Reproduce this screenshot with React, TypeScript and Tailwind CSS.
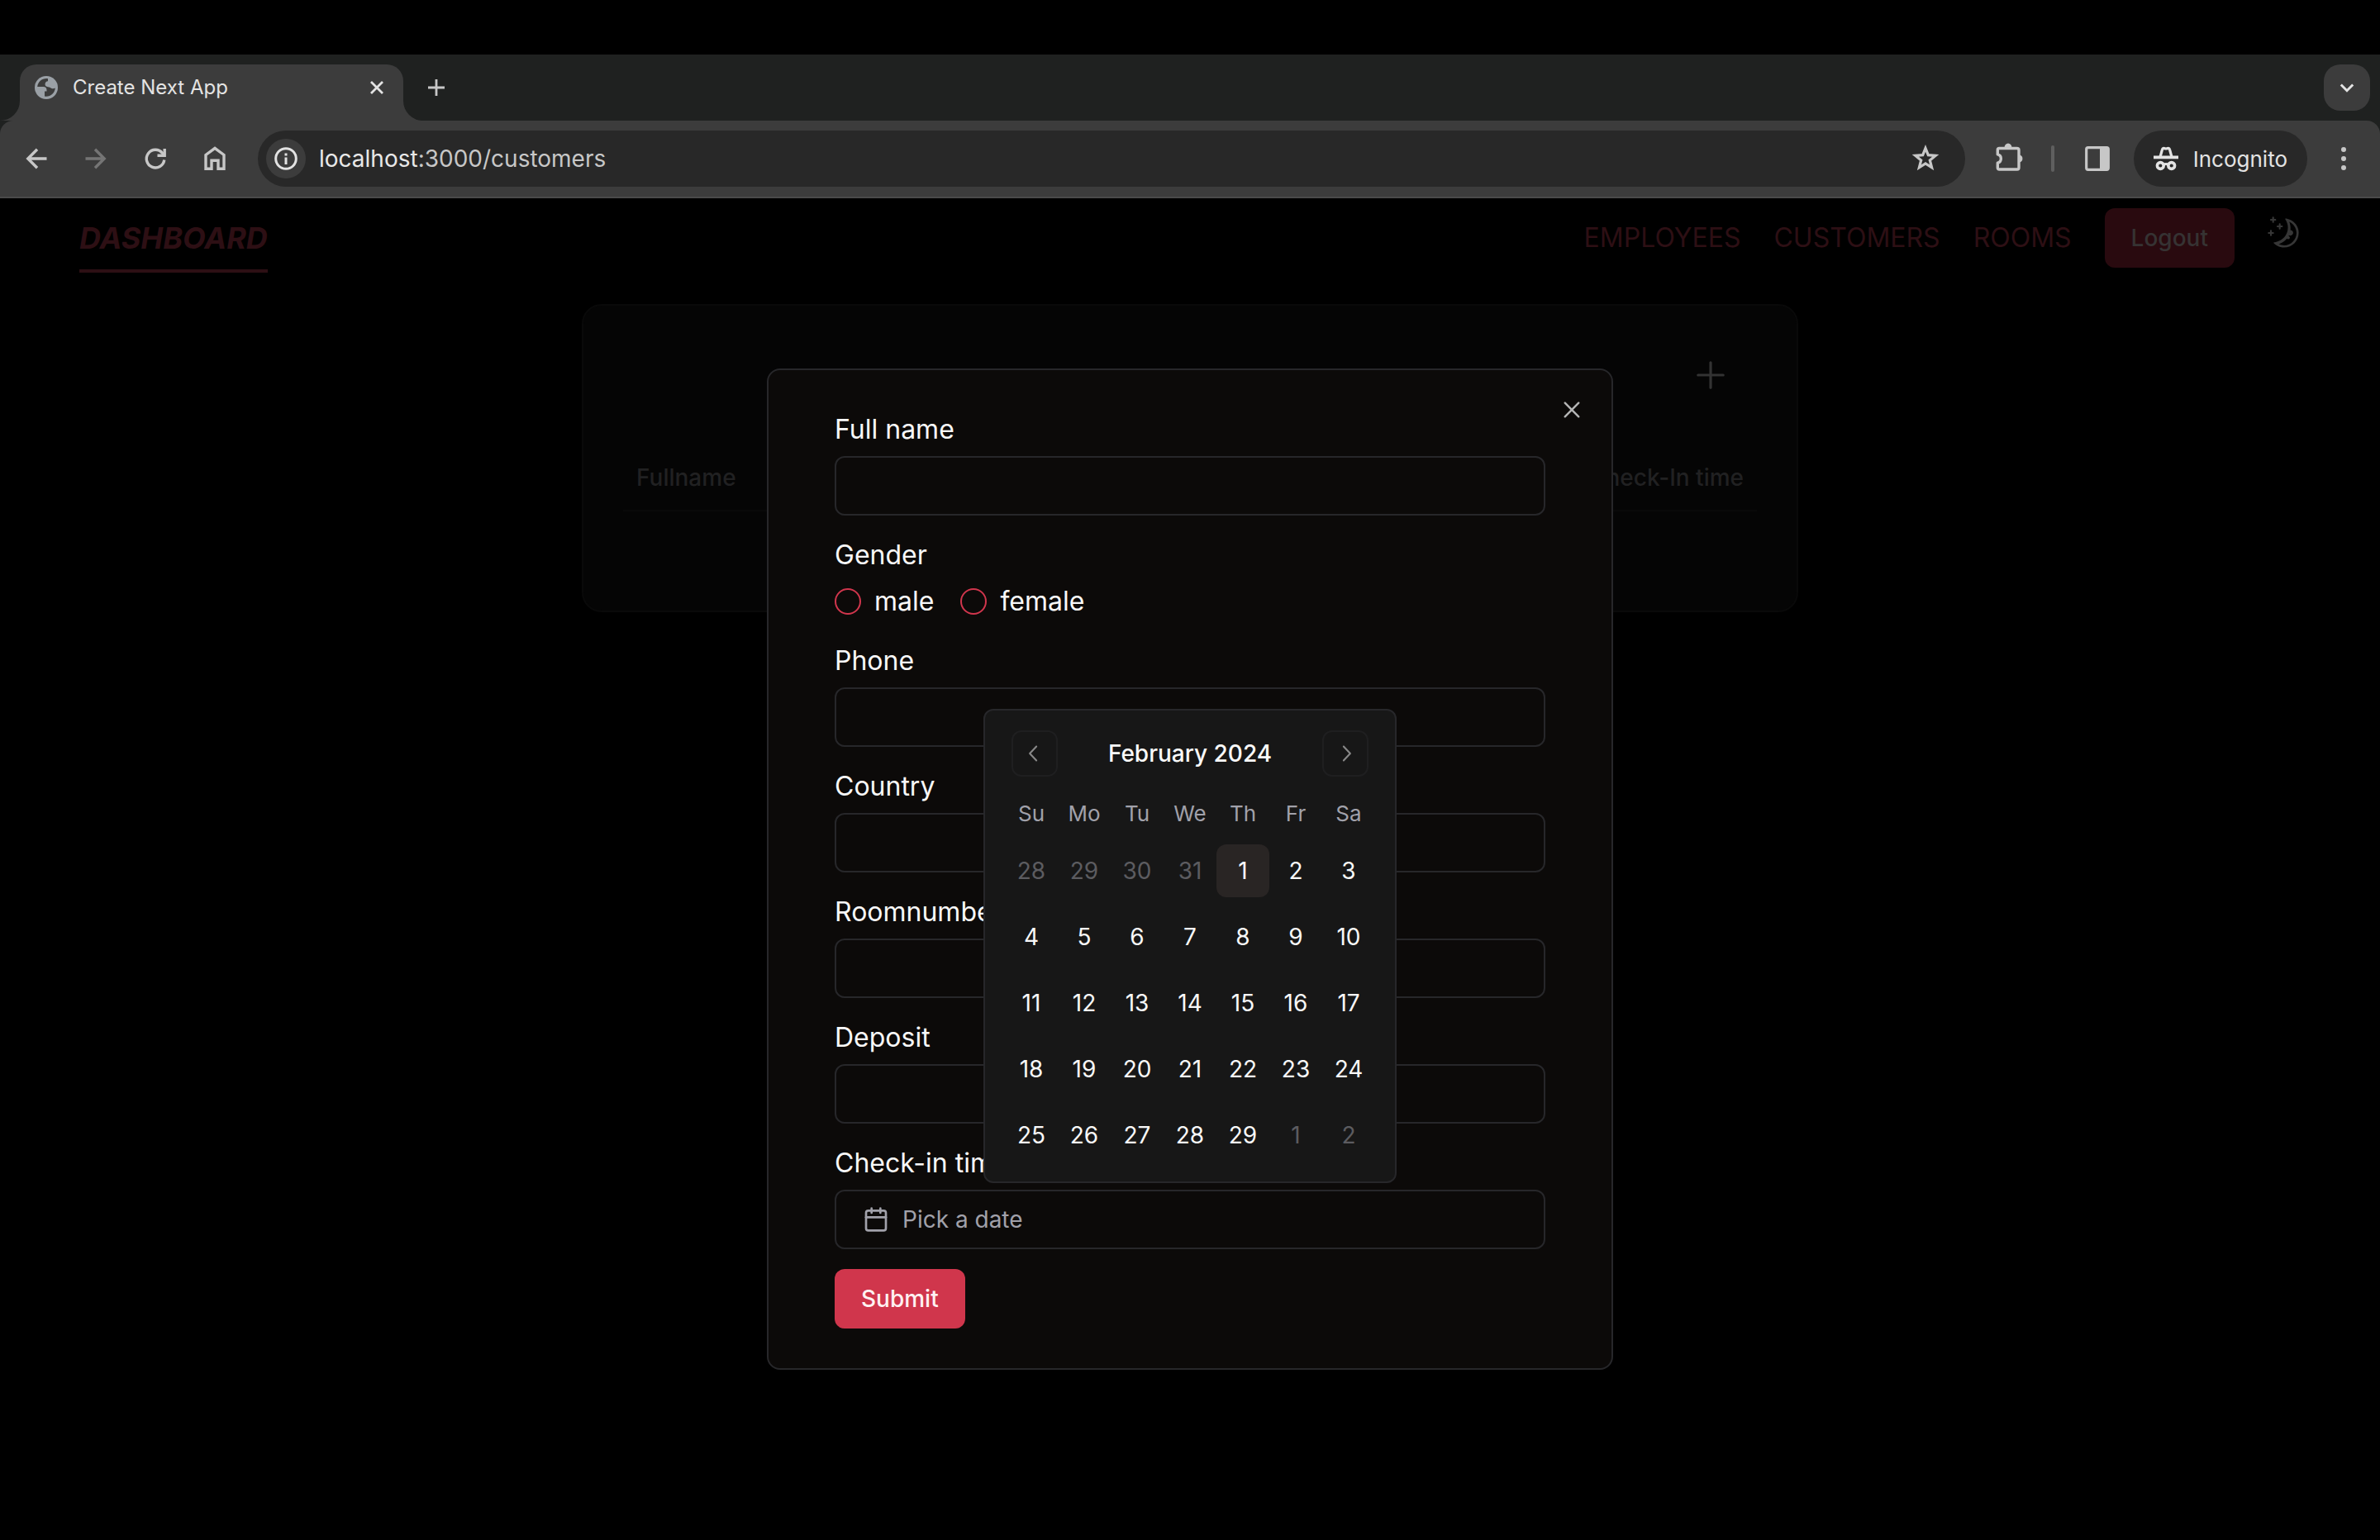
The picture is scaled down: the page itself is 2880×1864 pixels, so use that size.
import React from "react";
import { Calendar } from "lucide-react";
import { RxChevronLeft, RxChevronRight, RxCross2, RxMoon, RxPlus } from "react-icons/rx";

const WEEKDAYS = ["Su", "Mo", "Tu", "We", "Th", "Fr", "Sa"];
const WEEKS = [
  [28, 29, 30, 31, 1, 2, 3],
  [4, 5, 6, 7, 8, 9, 10],
  [11, 12, 13, 14, 15, 16, 17],
  [18, 19, 20, 21, 22, 23, 24],
  [25, 26, 27, 28, 29, 1, 2],
];

function GlobeIcon() {
  return (
    <svg viewBox="0 0 28 28" className="size-7 shrink-0" aria-hidden="true">
      <circle cx="14" cy="14" r="14" fill="#9aa0a6" />
      <path
        fill="#3c3c3c"
        d="M16 3.2C9.500 2.300 4 6.500 3.200 13H10.500C13 13 14.500 14.500 14.500 17V18.500H12V24.600C18.500 25.800 24.500 21 24.800 14.500C23.500 15.500 21.500 15.600 20 14.800C18.500 14 18.200 13.300 16 13.200C13.500 13 12.300 11.500 12.600 9.500C12.800 7.500 14 6.500 16 6.300Z"
      />
    </svg>
  );
}

function BackIcon() {
  return (
    <svg viewBox="0 0 40 40" className="size-10" fill="none" stroke="currentColor" strokeWidth="3.400" aria-hidden="true">
      <path d="M32.500 20H10M21 8.800L9.800 20L21 31.200" />
    </svg>
  );
}

function ForwardIcon() {
  return (
    <svg viewBox="0 0 40 40" className="size-10" fill="none" stroke="currentColor" strokeWidth="3.400" aria-hidden="true">
      <path d="M7.500 20H30M19 8.800L30.200 20L19 31.200" />
    </svg>
  );
}

function ReloadIcon() {
  return (
    <svg viewBox="0 0 40 40" className="size-10" fill="none" stroke="currentColor" strokeWidth="3.400" aria-hidden="true">
      <path d="M30.800 21.500A10.800 10.800 0 1 1 28.500 13.300L30.500 16" />
      <path d="M31.200 8V16.300H22.500" />
    </svg>
  );
}

function HomeIcon() {
  return (
    <svg viewBox="0 0 40 40" className="size-10" fill="none" stroke="currentColor" strokeWidth="3.400" aria-hidden="true">
      <path d="M9 32.300V15.500L20 7.400L31 15.500V32.300H24V22.300H16V32.300Z" />
    </svg>
  );
}

function InfoIcon() {
  return (
    <svg viewBox="0 0 28 28" className="size-7" aria-hidden="true">
      <circle cx="14" cy="14" r="12.300" fill="none" stroke="currentColor" strokeWidth="3" />
      <rect x="12.500" y="12.500" width="3" height="8.500" fill="currentColor" />
      <rect x="12.500" y="7.500" width="3" height="3" fill="currentColor" />
    </svg>
  );
}

function StarIcon() {
  return (
    <svg viewBox="0 0 40 40" className="size-10" aria-hidden="true">
      <path
        fill="none"
        stroke="currentColor"
        strokeWidth="3.200"
        d="M20 7.300L23.300 15.700L32.200 16.300L25.300 22L27.600 30.800L20 26L12.400 30.800L14.700 22L7.800 16.300L16.700 15.700Z"
      />
    </svg>
  );
}

function PuzzleIcon() {
  return (
    <svg viewBox="0 0 40 40" className="size-10" aria-hidden="true">
      <path
        fill="none"
        stroke="currentColor"
        strokeWidth="3.400"
        strokeLinejoin="round"
        d="M5.300 9.500Q5.300 7.500 7.300 7.500H28.500Q31 7.500 31 9.500V31Q31 33 29 33H7.300Q5.300 33 5.300 31V25.200A5.300 5.300 0 0 0 5.300 14.900Z"
      />
      <path fill="currentColor" d="M13.500 7A4.500 5.500 0 0 1 22.500 7ZM31.500 15.500A4.600 4.600 0 0 1 31.500 24.600Z" />
    </svg>
  );
}

function SidePanelIcon() {
  return (
    <svg viewBox="0 0 30 30" className="size-[30px]" aria-hidden="true">
      <rect x="1.700" y="1.700" width="26.600" height="26.600" rx="2" fill="none" stroke="currentColor" strokeWidth="3.200" />
      <rect x="18" y="2" width="11" height="26" fill="currentColor" />
    </svg>
  );
}

function IncognitoIcon() {
  return (
    <svg viewBox="0 0 30 30" className="size-[30px]" aria-hidden="true">
      <path
        fill="none"
        stroke="currentColor"
        strokeWidth="3.200"
        strokeLinejoin="round"
        d="M8 13L10.500 4Q11 2 13 2.600Q15 3.400 17 2.600Q19 2 19.500 4L22 13"
      />
      <rect x="0" y="11.500" width="30" height="3.800" fill="currentColor" />
      <circle cx="8.300" cy="23.500" r="3.900" fill="none" stroke="currentColor" strokeWidth="3.600" />
      <circle cx="21.700" cy="23.500" r="3.900" fill="none" stroke="currentColor" strokeWidth="3.600" />
      <path d="M12 22.500Q15 20.500 18 22.500" fill="none" stroke="currentColor" strokeWidth="3" />
    </svg>
  );
}

function TabStrip() {
  return (
    <div className="flex h-20 items-end bg-[#1f2120] pr-3 pl-6">
      <div className="relative flex h-[68px] w-[464px] items-center rounded-t-[20px] bg-[#3c3c3c] pb-3 pr-5 pl-[18px]">
        <span className="absolute bottom-0 -left-6 size-6 bg-[#3c3c3c]">
          <span className="block size-full rounded-br-[24px] bg-[#1f2120]" />
        </span>
        <span className="absolute -right-6 bottom-0 size-6 bg-[#3c3c3c]">
          <span className="block size-full rounded-bl-[24px] bg-[#1f2120]" />
        </span>
        <GlobeIcon />
        <span className="ml-[18px] flex-1 text-[24px] text-[#e3e3e3]">Create Next App</span>
        <button type="button" aria-label="Close tab" className="text-[#e3e3e3]">
          <svg viewBox="0 0 24 24" className="size-6" stroke="currentColor" strokeWidth="2.800" aria-hidden="true">
            <path d="M5 5L19 19M19 5L5 19" />
          </svg>
        </button>
      </div>
      <button type="button" aria-label="New tab" className="mb-7 ml-7 text-[#c7c7c7]">
        <svg viewBox="0 0 24 24" className="size-6" stroke="currentColor" strokeWidth="2.800" aria-hidden="true">
          <path d="M12 2V22M2 12H22" />
        </svg>
      </button>
      <button
        type="button"
        aria-label="Search tabs"
        className="mb-3 ml-auto flex size-14 items-center justify-center rounded-[20px] bg-[#3c3c3c] text-[#e3e3e3]"
      >
        <svg viewBox="0 0 20 20" className="size-5" fill="none" stroke="currentColor" strokeWidth="3" aria-hidden="true">
          <path d="M2.800 6.500L10 13.700L17.200 6.500" />
        </svg>
      </button>
    </div>
  );
}

function Toolbar() {
  return (
    <div className="bg-[#1f2120]">
      <div className="flex h-[94px] items-center rounded-t-2xl border-b-2 border-[#4a4a4a] bg-[#3c3c3c] pr-6 pl-6 text-[#c7c7c7]">
        <div className="flex gap-8">
          <button type="button" aria-label="Back"><BackIcon /></button>
          <button type="button" aria-label="Forward" className="text-[#757575]"><ForwardIcon /></button>
          <button type="button" aria-label="Reload"><ReloadIcon /></button>
          <button type="button" aria-label="Home"><HomeIcon /></button>
        </div>
        <div className="ml-8 flex h-[68px] flex-1 items-center rounded-full bg-[#282828] pr-7 pl-[10px]">
          <button
            type="button"
            aria-label="View site information"
            className="flex size-12 items-center justify-center rounded-full bg-[#3c3c3c] text-[#e3e3e3]"
          >
            <InfoIcon />
          </button>
          <div className="ml-4 flex-1 text-[28px]">
            <span className="text-[#e8e8e8]">localhost</span>:3000/customers
          </div>
          <button type="button" aria-label="Bookmark this tab"><StarIcon /></button>
        </div>
        <div className="ml-8 flex items-center gap-7">
          <button type="button" aria-label="Extensions" className="flex w-11 justify-center"><PuzzleIcon /></button>
          <span className="h-8 w-1 rounded-full bg-[#5f5f5f]" />
          <button type="button" aria-label="Side panel" className="flex w-12 justify-center"><SidePanelIcon /></button>
        </div>
        <button type="button" className="ml-5 flex h-[68px] items-center gap-[18px] rounded-full bg-[#282828] px-6 text-[26px] text-[#e3e3e3]">
          <IncognitoIcon />
          Incognito
        </button>
        <button type="button" aria-label="Menu" className="ml-6 flex w-10 flex-col items-center gap-[5px]">
          <span className="size-[6px] rounded-full bg-[#c7c7c7]" />
          <span className="size-[6px] rounded-full bg-[#c7c7c7]" />
          <span className="size-[6px] rounded-full bg-[#c7c7c7]" />
        </button>
      </div>
    </div>
  );
}

function SiteHeader() {
  return (
    <header className="flex items-start justify-between px-24 pt-3">
      <a href="#dashboard" className="mt-3 border-b-4 border-[#2d0f14] pb-[14px] text-[36px] leading-[48px] font-bold text-[#2d0f14] italic">
        DASHBOARD
      </a>
      <nav className="flex items-center gap-10 text-[32px] text-[#2d0f14]">
        <a href="#employees">EMPLOYEES</a>
        <a href="#customers">CUSTOMERS</a>
        <a href="#rooms">ROOMS</a>
        <button type="button" className="h-[72px] rounded-xl bg-[#290a0f] px-8 text-[28px] font-medium text-[#363333]">
          Logout
        </button>
        <button type="button" aria-label="Toggle theme" className="mb-3 text-[#363636]">
          <RxMoon size={40} />
        </button>
      </nav>
    </header>
  );
}

function CustomerList() {
  return (
    <section className="mx-auto mt-[38px] w-[1472px] rounded-3xl border-2 border-[#090909] bg-[#050505] px-12 pt-[60px] pb-[120px]">
      <div className="flex justify-end pr-8">
        <button type="button" aria-label="Add customer" className="text-[#333333]">
          <RxPlus size={48} />
        </button>
      </div>
      <table className="mt-[60px] w-full text-[28px] text-[#212122]">
        <thead>
          <tr className="h-20 border-b-2 border-[#090909]">
            <th scope="col" className="px-4 text-left font-medium">Fullname</th>
            <th scope="col" className="px-4 text-right font-medium">Check-In time</th>
          </tr>
        </thead>
      </table>
    </section>
  );
}

function DatePopover() {
  return (
    <div className="absolute bottom-full left-1/2 mb-2 -translate-x-1/2 rounded-xl border-2 border-[#27272a] bg-[#171717] p-6">
      <div className="flex h-14 items-center justify-between px-2">
        <button type="button" aria-label="Previous month" className="flex size-14 items-center justify-center rounded-xl border-2 border-[#1f1f20] text-[#888888]">
          <RxChevronLeft size={32} />
        </button>
        <span className="text-[28px] font-medium text-[#fafafa]">February 2024</span>
        <button type="button" aria-label="Next month" className="flex size-14 items-center justify-center rounded-xl border-2 border-[#1f1f20] text-[#888888]">
          <RxChevronRight size={32} />
        </button>
      </div>
      <table className="mt-[26px] block">
        <thead className="block">
          <tr className="flex h-[38px]">
            {WEEKDAYS.map((day) => (
              <th key={day} scope="col" className="w-16 text-[26px] leading-[38px] font-normal text-[#a1a1aa]">
                {day}
              </th>
            ))}
          </tr>
        </thead>
        <tbody className="mt-[18px] flex flex-col gap-4">
          {WEEKS.map((week, w) => (
            <tr key={w} className="flex">
              {week.map((day, d) => {
                const outside = (w === 0 && d < 4) || (w === 4 && d > 4);
                const today = w === 0 && d === 4;
                const tone = outside
                  ? "text-[#5c5c60]"
                  : today
                    ? "bg-[#292524] text-[#fafafa]"
                    : "text-[#f8f8f8]";
                return (
                  <td key={d}>
                    <button type="button" className={`size-16 rounded-xl text-[28px] ${tone}`}>
                      {day}
                    </button>
                  </td>
                );
              })}
            </tr>
          ))}
        </tbody>
      </table>
    </div>
  );
}

function TextField({ id, label }: { id: string; label: string }) {
  return (
    <div className="flex flex-col gap-2">
      <label htmlFor={id} className="leading-[48px]">{label}</label>
      <input
        id={id}
        type="text"
        className="h-[72px] w-full rounded-xl border-2 border-[#27272a] bg-transparent px-6 text-[28px] outline-none"
      />
    </div>
  );
}

function GenderOption({ value }: { value: string }) {
  return (
    <label className="flex items-center gap-4 leading-[48px]">
      <input type="radio" name="gender" value={value} className="size-8 appearance-none rounded-full border-2 border-[#d1364d]" />
      {value}
    </label>
  );
}

function CustomerDialog() {
  return (
    <div className="absolute inset-0 flex items-center justify-center">
      <div role="dialog" aria-label="New customer" className="relative w-[1024px] rounded-2xl border-2 border-[#27272a] bg-[#0c0a09] px-20 py-12">
        <button type="button" aria-label="Close" className="absolute top-8 right-8 text-[#b5b5b5]">
          <RxCross2 size={32} />
        </button>
        <form className="flex flex-col gap-6 text-[32px] text-[#f8f8f8]" onSubmit={(e) => e.preventDefault()}>
          <TextField id="fullname" label="Full name" />
          <fieldset className="flex flex-col">
            <legend className="mb-2 leading-[48px]">Gender</legend>
            <div className="flex gap-8">
              <GenderOption value="male" />
              <GenderOption value="female" />
            </div>
          </fieldset>
          <TextField id="phone" label="Phone" />
          <TextField id="country" label="Country" />
          <TextField id="roomnumber" label="Roomnumber" />
          <TextField id="deposit" label="Deposit" />
          <div className="flex flex-col gap-2">
            <label htmlFor="checkin" className="leading-[48px]">Check-in time</label>
            <div className="relative">
              <button
                id="checkin"
                type="button"
                className="flex h-[72px] w-full items-center gap-4 rounded-xl border-2 border-[#27272a] px-8 text-[28px] text-[#a1a1aa]"
              >
                <Calendar size={32} />
                Pick a date
              </button>
              <DatePopover />
            </div>
          </div>
          <button type="submit" className="h-[72px] self-start rounded-xl bg-[#d0364c] px-8 text-[28px] font-medium text-[#fff1f2]">
            Submit
          </button>
        </form>
      </div>
    </div>
  );
}

export default function App() {
  return (
    <div className="flex min-h-screen flex-col bg-black pt-[66px] font-['Inter',sans-serif]">
      <TabStrip />
      <Toolbar />
      <main className="relative flex-1">
        <SiteHeader />
        <CustomerList />
        <CustomerDialog />
      </main>
    </div>
  );
}
